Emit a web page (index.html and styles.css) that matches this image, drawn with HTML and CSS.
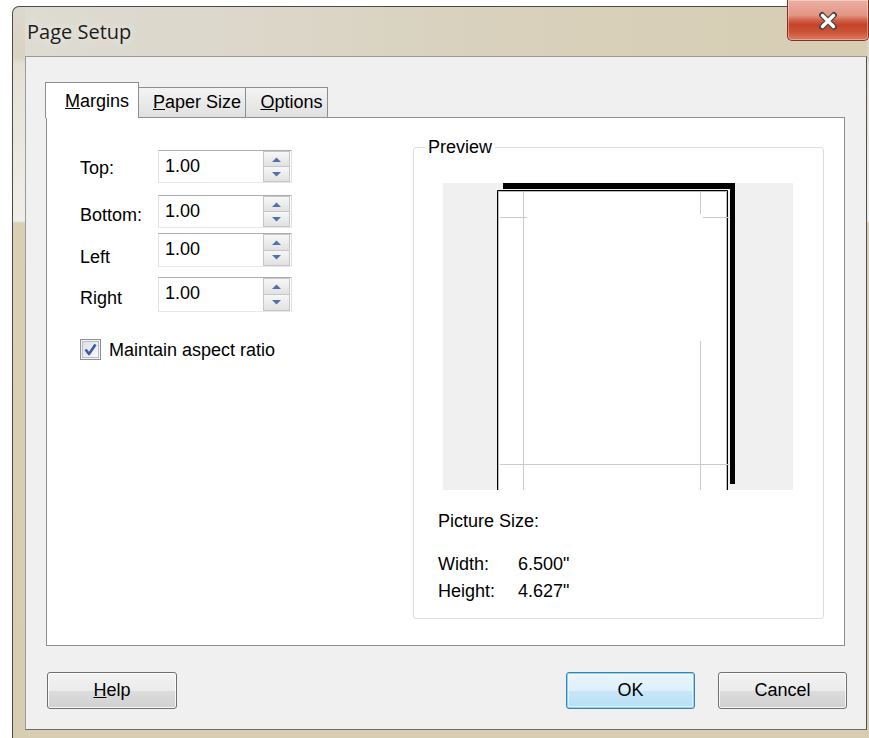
FILE: index.html
```html
<!DOCTYPE html>
<html lang="en">
<head>
<meta charset="utf-8">
<title>Page Setup</title>
<link rel="stylesheet" href="styles.css">
</head>
<body>
<div class="window">
  <div class="titlebar">
    <span class="title">Page Setup</span>
    <button class="close" type="button" aria-label="Close">
      <svg width="20" height="20" viewBox="0 0 20 20">
        <path d="M4 4 L16 16 M16 4 L4 16" stroke="#4a4a4a" stroke-width="6" stroke-linecap="round"/>
        <path d="M4.5 4.5 L15.5 15.5 M15.5 4.5 L4.5 15.5" stroke="#ffffff" stroke-width="3.2" stroke-linecap="round"/>
      </svg>
    </button>
  </div>

  <div class="client">
    <div class="tabs">
      <div class="tab active"><u>M</u>argins</div>
      <div class="tab"><u>P</u>aper Size</div>
      <div class="tab"><u>O</u>ptions</div>
    </div>

    <div class="panel">
      <div class="margins">
        <div class="field field-top">
          <span class="lbl">Top:</span>
          <div class="spin"><span class="val">1.00</span>
            <div class="btns">
              <span class="sb"><svg width="9" height="5" viewBox="0 0 9 5"><polygon points="0,5 4.5,0.5 9,5" fill="#5370ad"/></svg></span>
              <span class="sb"><svg width="9" height="5" viewBox="0 0 9 5"><polygon points="0,0 9,0 4.5,4.5" fill="#5370ad"/></svg></span>
            </div>
          </div>
        </div>
        <div class="field field-bottom">
          <span class="lbl">Bottom:</span>
          <div class="spin"><span class="val">1.00</span>
            <div class="btns">
              <span class="sb"><svg width="9" height="5" viewBox="0 0 9 5"><polygon points="0,5 4.5,0.5 9,5" fill="#5370ad"/></svg></span>
              <span class="sb"><svg width="9" height="5" viewBox="0 0 9 5"><polygon points="0,0 9,0 4.5,4.5" fill="#5370ad"/></svg></span>
            </div>
          </div>
        </div>
        <div class="field field-left">
          <span class="lbl">Left</span>
          <div class="spin"><span class="val">1.00</span>
            <div class="btns">
              <span class="sb"><svg width="9" height="5" viewBox="0 0 9 5"><polygon points="0,5 4.5,0.5 9,5" fill="#5370ad"/></svg></span>
              <span class="sb"><svg width="9" height="5" viewBox="0 0 9 5"><polygon points="0,0 9,0 4.5,4.5" fill="#5370ad"/></svg></span>
            </div>
          </div>
        </div>
        <div class="field field-right">
          <span class="lbl">Right</span>
          <div class="spin"><span class="val">1.00</span>
            <div class="btns">
              <span class="sb"><svg width="9" height="5" viewBox="0 0 9 5"><polygon points="0,5 4.5,0.5 9,5" fill="#5370ad"/></svg></span>
              <span class="sb"><svg width="9" height="5" viewBox="0 0 9 5"><polygon points="0,0 9,0 4.5,4.5" fill="#5370ad"/></svg></span>
            </div>
          </div>
        </div>

        <label class="check">
          <span class="box">
            <svg width="15" height="15" viewBox="0 0 15 15"><path d="M2.5 7.5 L6 12 L12.5 2.5" fill="none" stroke="#3d5aa6" stroke-width="2.6" stroke-linejoin="round"/></svg>
          </span>
          <span>Maintain aspect ratio</span>
        </label>
      </div>

      <fieldset class="preview">
        <legend>Preview</legend>
        <svg class="sheet" width="350" height="307" viewBox="0 0 350 307">
          <rect width="350" height="307" fill="#f0f0f0"/>
          <!-- drop shadow of the page -->
          <rect x="60" y="0" width="232" height="6" fill="#000"/>
          <rect x="287" y="0" width="5" height="301" fill="#000"/>
          <!-- the page -->
          <rect x="54" y="7" width="231" height="300" fill="#fff"/>
          <path d="M54.5 307 V7.5 H284.5 V307" fill="none" stroke="#000"/>
          <path d="M55.5 307 V8.5 H283.5 V307" fill="none" stroke="#b9b9b9"/>
          <!-- margin guides -->
          <path d="M80.5 9 V307 M257.5 9 V31 M257.5 158 V307 M57 34.5 H84 M260 34.5 H286 M57 281.5 H286" fill="none" stroke="#cbcbcb"/>
        </svg>
        <div class="size-title">Picture Size:</div>
        <div class="size-row size-w"><span class="k">Width:</span><span>6.500"</span></div>
        <div class="size-row size-h"><span class="k">Height:</span><span>4.627"</span></div>
      </fieldset>
    </div>

    <div class="actions">
      <button class="btn" type="button"><u>H</u>elp</button>
      <button class="btn btn-default" type="button">OK</button>
      <button class="btn btn-cancel" type="button">Cancel</button>
    </div>
  </div>
</div>
</body>
</html>
```
FILE: styles.css
```css
html, body {
  margin: 0;
  padding: 0;
}

body {
  width: 869px;
  height: 738px;
  overflow: hidden;
  background: #ffffff;
  font-family: "Liberation Sans", Arial, sans-serif;
  font-size: 18px;
  color: #000;
}

/* ---- window frame ---- */
.window {
  margin: 6px 0 0 12px;
  width: 869px;
  box-sizing: border-box;
  border: 1px solid #4a4a4a;
  border-bottom: 0;
  border-radius: 7px 7px 0 0;
  padding: 0 13px 12px 12px;
  background: linear-gradient(180deg,
    #dcd8cc 0px, #d9d3c3 50px, #e4e0d4 58px,
    #ebe8df 140px, #f0eee8 214px, #d8cfb5 216px, #d6cdb2 100%);
}

.titlebar {
  display: flex;
  align-items: flex-start;
  height: 49px;
  background: linear-gradient(90deg, #dedbd2 0%, #dbd6c8 30%, #d8d0ba 62%, #d6cdb3 100%);
}

.title {
  font-family: "Open Sans", "Noto Sans", sans-serif;
  font-size: 20px;
  line-height: 28px;
  margin: 11px 0 0 2px;
  color: #1c1c1c;
  text-shadow: 0 0 8px rgba(255, 255, 255, 0.8);
}

.close {
  margin: -7px -2px 0 auto;
  width: 82px;
  height: 41px;
  padding: 0;
  display: flex;
  align-items: center;
  justify-content: center;
  border: 1px solid #7a3528;
  border-top: 0;
  border-radius: 0 0 5px 5px;
  background: linear-gradient(180deg,
    #eab0a2 0%, #e39685 38%, #d2634b 50%, #c4432a 62%, #cc5236 80%, #dd7b62 100%);
  box-shadow: inset 0 0 0 1px rgba(255, 255, 255, 0.35);
}

.close svg {
  margin-top: 2px;
}

/* ---- client area ---- */
.client {
  width: 842px;
  height: 674px;
  box-sizing: border-box;
  border: 1px solid #9a9a9a;
  border-right-color: #505050;
  border-bottom-color: #6a6a6a;
  background: #f0f0f0;
}

.tabs {
  display: flex;
  align-items: flex-end;
  height: 35px;
  margin: 25px 0 0 19px;
}

.tab {
  position: relative;
  box-sizing: border-box;
  height: 30px;
  padding: 4px 0 0 10px;
  line-height: 20px;
  text-align: center;
  border: 1px solid #8c8e94;
  border-bottom: 0;
  margin-left: -1px;
  background: linear-gradient(180deg, #f4f4f4 0%, #e9e9e9 55%, #e0e0e0 100%);
}

.tab:nth-child(1) { width: 94px; margin-left: 0; }
.tab:nth-child(2) { width: 108px; }
.tab:nth-child(3) { width: 83px; }

.tab.active {
  z-index: 1;
  height: 36px;
  margin-bottom: -1px;
  padding-top: 8px;
  background: #ffffff;
}

.panel {
  display: flex;
  align-items: flex-start;
  margin-left: 20px;
  width: 799px;
  height: 529px;
  box-sizing: border-box;
  border: 1px solid #8c8e94;
  background: #ffffff;
}

/* ---- margin fields ---- */
.margins {
  padding: 32px 0 0 33px;
}

.field {
  display: flex;
  align-items: flex-start;
}

.lbl {
  width: 78px;
  line-height: 20px;
}

.field-top .lbl { padding-top: 8px; }
.field-bottom { margin-top: 12px; }
.field-bottom .lbl { padding-top: 10px; }
.field-left { margin-top: 5px; }
.field-left .lbl { padding-top: 14px; }
.field-left .spin { height: 34px; }
.field-right { margin-top: 10px; }
.field-right .lbl { padding-top: 11px; }
.field-right .spin { height: 35px; }

.spin {
  display: flex;
  width: 134px;
  height: 33px;
  box-sizing: border-box;
  border: 1px solid;
  border-color: #abadb3 #dbdfe6 #e3e9ef #e2e3ea;
  background: #fff;
}

.val {
  flex: 1;
  padding: 5px 0 0 6px;
  line-height: 20px;
}

.btns {
  display: flex;
  flex-direction: column;
  width: 27px;
  margin: 0 1px 0 0;
}

.sb {
  flex: 1;
  display: flex;
  align-items: center;
  justify-content: center;
  border: 1px solid #c6c6c6;
  background: linear-gradient(180deg, #f7f7f7 0%, #ececec 50%, #e1e1e1 100%);
}

.sb + .sb {
  border-top: 0;
}

.check {
  display: flex;
  align-items: center;
  gap: 8px;
  margin-top: 27px;
  line-height: 20px;
}

.box {
  width: 21px;
  height: 21px;
  box-sizing: border-box;
  display: flex;
  align-items: center;
  justify-content: center;
  border: 1px solid #8e8f8f;
  background: linear-gradient(135deg, #d9dde6 0%, #eef0f4 60%, #fbfbfb 100%);
  box-shadow: inset 0 0 0 1px #f4f4f4, inset 0 0 0 2px #b7bcc6;
}

/* ---- preview group ---- */
.preview {
  margin: 19px 20px 0 auto;
  padding: 0;
  width: 411px;
  height: 482px;
  box-sizing: border-box;
  min-width: 0;
  border: 1px solid #d5dfe5;
  border-radius: 3px;
}

.preview legend {
  margin-left: 11px;
  padding: 0 3px;
  line-height: 20px;
}

.sheet {
  display: block;
  margin: 26px 0 0 29px;
}

.size-title {
  margin: 21px 0 0 24px;
  line-height: 20px;
}

.size-row {
  display: flex;
  margin-left: 24px;
  line-height: 20px;
}

.size-w { margin-top: 23px; }
.size-h { margin-top: 7px; }

.k {
  width: 80px;
}

/* ---- dialog buttons ---- */
.actions {
  display: flex;
  margin: 26px 19px 0 21px;
}

.btn {
  width: 129px;
  height: 37px;
  padding: 0;
  font-family: inherit;
  font-size: 18px;
  color: #000;
  border: 1px solid #707070;
  border-radius: 3px;
  background: linear-gradient(180deg, #f3f3f3 0%, #ebebeb 50%, #dddddd 51%, #d0d0d0 100%);
  box-shadow: inset 0 0 0 1px rgba(255, 255, 255, 0.8);
}

.btn:first-child {
  width: 130px;
}

.btn-default {
  margin-left: auto;
  border-color: #3c7fb1;
  background: linear-gradient(180deg, #eaf6fd 0%, #dcf0fb 50%, #c7e7f8 51%, #b8dff4 100%);
  box-shadow: inset 0 0 0 1px #8fd4f5, inset 0 0 0 2px rgba(255, 255, 255, 0.5);
}

.btn-cancel {
  margin-left: 23px;
}
```
